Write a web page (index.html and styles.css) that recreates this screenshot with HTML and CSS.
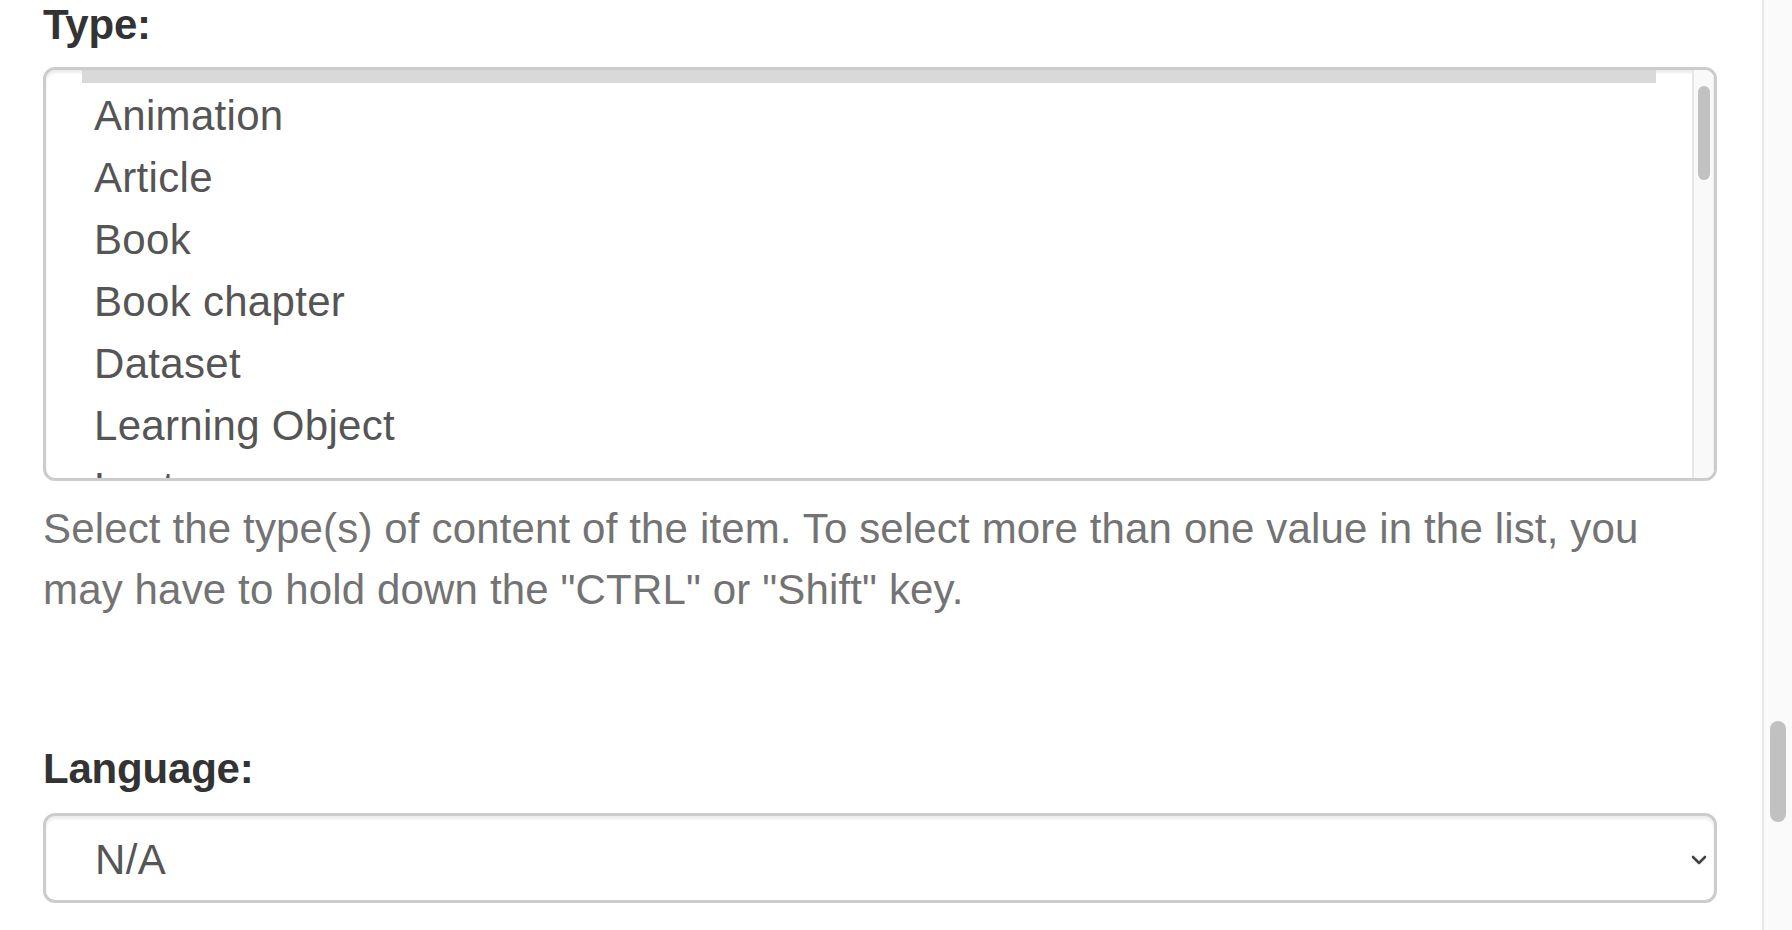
FILE: index.html
```html
<!DOCTYPE html>
<html lang="en">
<head>
<meta charset="utf-8">
<title>Type and Language</title>
<link rel="stylesheet" href="styles.css">
</head>
<body>
<div class="page">
  <main class="content">
    <div class="form-group">
      <label class="label label-first">Type:</label>
      <div class="listbox">
        <div class="listbox-viewport">
          <ul class="options">
            <li class="option option-selected">&nbsp;</li>
            <li class="option">Animation</li>
            <li class="option">Article</li>
            <li class="option">Book</li>
            <li class="option">Book chapter</li>
            <li class="option">Dataset</li>
            <li class="option">Learning Object</li>
            <li class="option">Lecture</li>
          </ul>
        </div>
        <div class="listbox-scrollbar"><div class="listbox-thumb"></div></div>
      </div>
      <p class="help">Select the type(s) of content of the item. To select more than one value in the list, you may have to hold down the "CTRL" or "Shift" key.</p>
    </div>
    <div class="form-group form-group-next">
      <label class="label">Language:</label>
      <div class="select">
        <span class="select-value">N/A</span>
        <svg class="chevron" width="16" height="10" viewBox="0 0 16 10" aria-hidden="true">
          <polyline points="2,2 8,8 14,2" fill="none" stroke="#444" stroke-width="2.6" stroke-linecap="round" stroke-linejoin="round"/>
        </svg>
      </div>
    </div>
  </main>
  <div class="page-scrollbar"><div class="page-thumb"></div></div>
</div>
</body>
</html>
```
FILE: styles.css
```css
html, body {
  margin: 0;
  padding: 0;
  background: #ffffff;
}

body {
  font-family: "Liberation Sans", Arial, Helvetica, sans-serif;
  font-size: 42px;
  color: #333333;
}

.page {
  display: flex;
  height: 930px;
  overflow: hidden;
}

.content {
  flex: 1;
  padding: 0 45px 0 43px;
  min-width: 0;
}

.label {
  display: block;
  font-weight: bold;
  line-height: 60px;
  color: #333333;
  letter-spacing: -0.2px;
  margin-bottom: 14px;
}

.label-first {
  margin-top: -5px;
  margin-bottom: 12px;
}

.listbox {
  display: flex;
  height: 414px;
  box-sizing: border-box;
  border: 3px solid #cccccc;
  border-radius: 12px;
  overflow: hidden;
  box-shadow: inset 0 3px 3px rgba(0, 0, 0, 0.075);
  background: #ffffff;
}

.listbox-viewport {
  flex: 1;
  overflow: hidden;
  padding: 0 36px;
}

.options {
  list-style: none;
  margin: -49px 0 0 0;
  padding: 0;
}

.option {
  height: 62px;
  box-sizing: border-box;
  padding: 4px 0 0 12px;
  line-height: 58px;
  color: #555555;
  letter-spacing: 0.3px;
  white-space: nowrap;
}

.option-selected {
  background: #d9d9d9;
}

.listbox-scrollbar {
  width: 19px;
  flex: none;
  background: #f9f9f9;
  border-left: 2px solid #e6e6e6;
  border-right: 1px solid #eeeeee;
}

.listbox-thumb {
  width: 12px;
  height: 94px;
  margin: 16px 0 0 4px;
  border-radius: 6px;
  background: #c1c1c1;
}

.help {
  margin: 17px 0 0 0;
  line-height: 61px;
  color: #737373;
  letter-spacing: 0.15px;
}

.form-group-next {
  margin-top: 119px;
}

.select {
  display: flex;
  align-items: center;
  justify-content: space-between;
  height: 90px;
  box-sizing: border-box;
  border: 3px solid #cccccc;
  border-radius: 12px;
  padding: 3px 7px 0 49px;
  box-shadow: inset 0 3px 3px rgba(0, 0, 0, 0.075);
  color: #555555;
}

.select-value {
  line-height: 60px;
  letter-spacing: 0.35px;
}

.chevron {
  display: block;
  margin-top: 1px;
}

.page-scrollbar {
  width: 28px;
  flex: none;
  background: #fafafa;
  border-left: 2px solid #e8e8e8;
}

.page-thumb {
  width: 16px;
  height: 101px;
  margin: 721px 0 0 6px;
  border-radius: 8px;
  background: #c1c1c1;
}
```
